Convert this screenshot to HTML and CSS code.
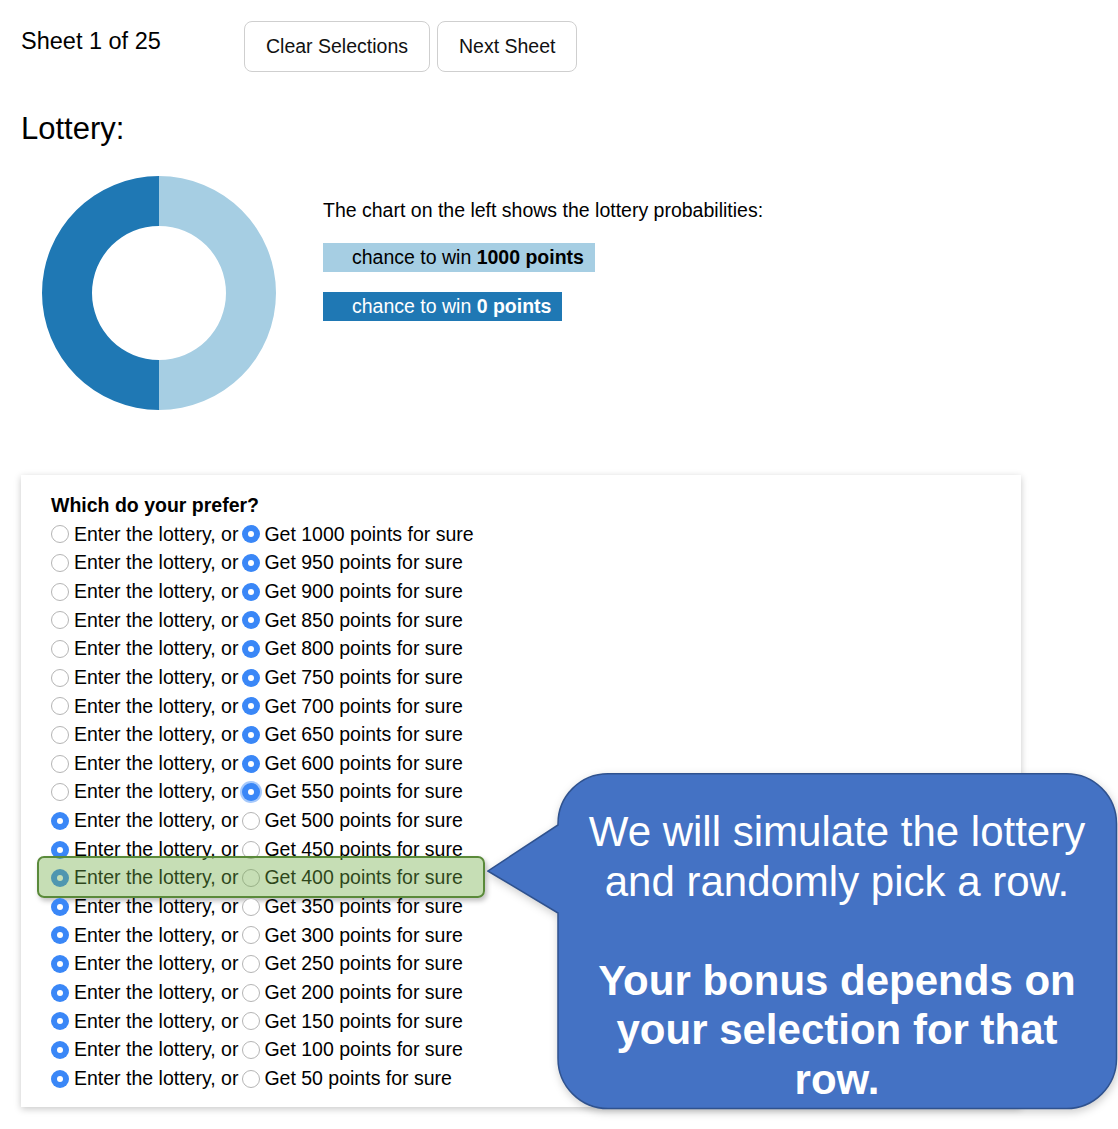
FILE: index.html
```html
<!DOCTYPE html>
<html lang="en">
<head>
<meta charset="utf-8">
<title>Lottery Sheet</title>
<link rel="stylesheet" href="styles.css">
</head>
<body>
<div class="page">
  <header class="topbar">
    <div class="sheet-label">Sheet 1 of 25</div>
    <div class="buttons">
      <button class="btn" type="button">Clear Selections</button>
      <button class="btn" type="button">Next Sheet</button>
    </div>
  </header>

  <h2 class="title">Lottery:</h2>

  <section class="lottery">
    <svg class="donut" width="236" height="236" viewBox="0 0 236 236">
      <path d="M118 1 A117 117 0 0 1 118 235 L118 185 A67 67 0 0 0 118 51 Z" fill="#a6cee3"/>
      <path d="M118 1 A117 117 0 0 0 118 235 L118 185 A67 67 0 0 1 118 51 Z" fill="#1f78b4"/>
    </svg>
    <div class="legend">
      <p class="legend-intro">The chart on the left shows the lottery probabilities:</p>
      <div class="chip chip-light">chance to win <b>1000 points</b></div>
      <div class="chip chip-dark">chance to win <b>0 points</b></div>
    </div>
  </section>

  <section class="card">
    <div class="question">Which do your prefer?</div>
    <div class="row"><span class="radio"></span>Enter the lottery, or<span class="radio radio-b checked"></span>Get 1000 points for sure</div>
    <div class="row"><span class="radio"></span>Enter the lottery, or<span class="radio radio-b checked"></span>Get 950 points for sure</div>
    <div class="row"><span class="radio"></span>Enter the lottery, or<span class="radio radio-b checked"></span>Get 900 points for sure</div>
    <div class="row"><span class="radio"></span>Enter the lottery, or<span class="radio radio-b checked"></span>Get 850 points for sure</div>
    <div class="row"><span class="radio"></span>Enter the lottery, or<span class="radio radio-b checked"></span>Get 800 points for sure</div>
    <div class="row"><span class="radio"></span>Enter the lottery, or<span class="radio radio-b checked"></span>Get 750 points for sure</div>
    <div class="row"><span class="radio"></span>Enter the lottery, or<span class="radio radio-b checked"></span>Get 700 points for sure</div>
    <div class="row"><span class="radio"></span>Enter the lottery, or<span class="radio radio-b checked"></span>Get 650 points for sure</div>
    <div class="row"><span class="radio"></span>Enter the lottery, or<span class="radio radio-b checked"></span>Get 600 points for sure</div>
    <div class="row"><span class="radio"></span>Enter the lottery, or<span class="radio radio-b checked focused"></span>Get 550 points for sure</div>
    <div class="row"><span class="radio checked"></span>Enter the lottery, or<span class="radio radio-b"></span>Get 500 points for sure</div>
    <div class="row"><span class="radio checked"></span>Enter the lottery, or<span class="radio radio-b"></span>Get 450 points for sure</div>
    <div class="row row-marked"><span class="radio checked"></span>Enter the lottery, or<span class="radio radio-b"></span>Get 400 points for sure<span class="highlight"></span></div>
    <div class="row"><span class="radio checked"></span>Enter the lottery, or<span class="radio radio-b"></span>Get 350 points for sure</div>
    <div class="row"><span class="radio checked"></span>Enter the lottery, or<span class="radio radio-b"></span>Get 300 points for sure</div>
    <div class="row"><span class="radio checked"></span>Enter the lottery, or<span class="radio radio-b"></span>Get 250 points for sure</div>
    <div class="row"><span class="radio checked"></span>Enter the lottery, or<span class="radio radio-b"></span>Get 200 points for sure</div>
    <div class="row"><span class="radio checked"></span>Enter the lottery, or<span class="radio radio-b"></span>Get 150 points for sure</div>
    <div class="row"><span class="radio checked"></span>Enter the lottery, or<span class="radio radio-b"></span>Get 100 points for sure</div>
    <div class="row"><span class="radio checked"></span>Enter the lottery, or<span class="radio radio-b"></span>Get 50 points for sure</div>
  </section>

  <div class="callout">
    <svg class="callout-shape" width="631" height="337" viewBox="0 0 631 337">
      <path d="M121 0.75 H579.5 A50 50 0 0 1 629.5 50.75 V285.5 A50 50 0 0 1 579.5 335.5 H121 A50 50 0 0 1 71 285.5 V140 L0.8 98 L71 52 V50.75 A50 50 0 0 1 121 0.75 Z" fill="#4472c4" stroke="#2f528f" stroke-width="1.5"/>
    </svg>
    <div class="callout-text">
      <p>We will simulate the lottery<br>and randomly pick a row.</p>
      <p class="callout-bold">Your bonus depends on<br>your selection for that<br>row.</p>
    </div>
  </div>
</div>
</body>
</html>
```

FILE: styles.css
```css
* {
  box-sizing: border-box;
}

body {
  margin: 0;
  background: #ffffff;
  color: #000000;
  font-family: "Liberation Sans", Arial, Helvetica, sans-serif;
}

.page {
  position: relative;
  padding: 21px 0 0 21px;
  min-height: 1129px;
}

/* Top bar */
.topbar {
  display: flex;
  align-items: flex-start;
}

.sheet-label {
  width: 223px;
  padding-top: 6px;
  font-size: 23.5px;
  line-height: 28px;
}

.buttons {
  display: flex;
  gap: 7px;
}

.btn {
  height: 51px;
  padding: 0 21px;
  background: #ffffff;
  border: 1px solid #cfcfcf;
  border-radius: 8px;
  font-family: "Liberation Sans", Arial, Helvetica, sans-serif;
  font-size: 19.5px;
  color: #111111;
}

/* Title */
.title {
  margin: 39px 0 0 0;
  font-size: 31px;
  font-weight: normal;
  line-height: 36px;
}

/* Lottery chart */
.lottery {
  display: flex;
  align-items: flex-start;
  margin-top: 28px;
  padding-left: 20px;
}

.donut {
  display: block;
  flex: none;
}

.legend {
  display: flex;
  flex-direction: column;
  align-items: flex-start;
  margin-left: 46px;
  padding-top: 23px;
  font-size: 19.5px;
}

.legend-intro {
  margin: 0 0 21px 0;
  line-height: 24px;
}

.chip {
  height: 29px;
  line-height: 29px;
  padding: 0 11px 0 29px;
  white-space: nowrap;
}

.chip-light {
  background: #a6cee3;
  color: #000000;
  margin-bottom: 20px;
}

.chip-dark {
  background: #1f78b4;
  color: #ffffff;
}

/* Card with choices */
.card {
  width: 1000px;
  margin-top: 64px;
  padding: 16px 30px 15px 30px;
  background: #ffffff;
  box-shadow: 0 2px 7px rgba(0, 0, 0, 0.22);
  font-size: 19.5px;
  line-height: 28.65px;
}

.question {
  font-weight: bold;
}

.row {
  position: relative;
  display: flex;
  align-items: center;
  height: 28.65px;
  white-space: nowrap;
}

.radio {
  position: relative;
  flex: none;
  width: 18px;
  height: 18px;
  margin: 1px 5px 0 0;
  border: 1px solid #b5b5b5;
  border-radius: 50%;
  background: #ffffff;
}

.radio-b {
  margin: 1px 4px 0 4px;
}

.radio.checked {
  border: none;
  background: #3a87f7;
}

.radio.checked::after {
  content: "";
  position: absolute;
  left: 6px;
  top: 6px;
  width: 6px;
  height: 6px;
  border-radius: 50%;
  background: #ffffff;
}

.radio.focused {
  box-shadow: 0 0 0 2px rgba(58, 135, 247, 0.45);
}

.highlight {
  position: absolute;
  left: -14px;
  top: -7px;
  width: 448px;
  height: 42px;
  border: 2px solid #5a8a3a;
  border-radius: 7px;
  background: rgba(112, 173, 71, 0.4);
  box-shadow: 2px 3px 5px rgba(0, 0, 0, 0.25);
  pointer-events: none;
}

/* Callout */
.callout {
  position: absolute;
  left: 487px;
  top: 773px;
  width: 631px;
  height: 337px;
}

.callout-shape {
  position: absolute;
  left: 0;
  top: 0;
  filter: drop-shadow(1px 3px 4px rgba(0, 0, 0, 0.2));
}

.callout-text {
  position: relative;
  margin-left: 71px;
  width: 558px;
  padding-top: 34px;
  color: #ffffff;
  text-align: center;
  font-size: 42px;
  line-height: 49.6px;
}

.callout-text p {
  margin: 0;
}

.callout-bold {
  margin-top: 49.6px !important;
  font-weight: bold;
}
```
